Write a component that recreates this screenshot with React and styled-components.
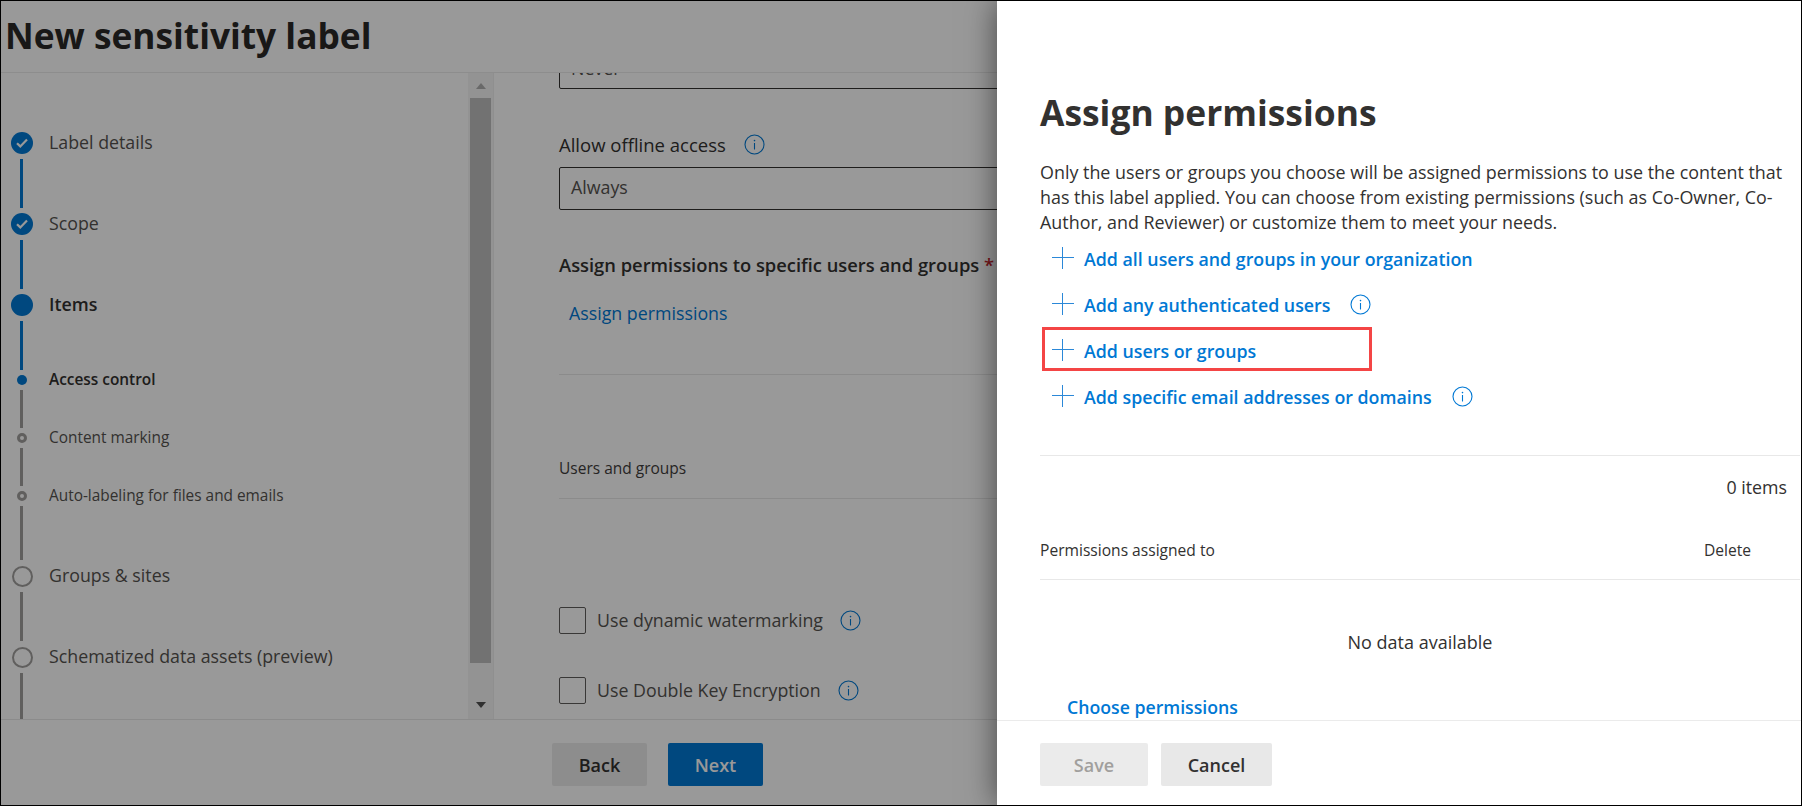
import React from "react";
import styled, { createGlobalStyle } from "styled-components";

const GlobalStyle = createGlobalStyle`
  html, body {
    margin: 0;
    padding: 0;
    background: #fff;
  }
  * {
    box-sizing: border-box;
  }
  body {
    font-family: "Open Sans", "Noto Sans", "Liberation Sans", sans-serif;
    color: #323130;
  }
`;

const Info = ({ color = "#0078d4" }) => (
  <svg width="21" height="21" viewBox="0 0 21 21" fill="none">
    <circle cx="10.5" cy="10.5" r="9.5" stroke={color} strokeWidth="1.1" />
    <path d="M10.5 9v6.5" stroke={color} strokeWidth="1.1" />
    <circle cx="10.5" cy="6.6" r="0.8" fill={color} />
  </svg>
);

const Plus = () => (
  <svg width="22" height="22" viewBox="0 0 22 22" fill="none">
    <path d="M10.5 0v22M0 10.5h22" stroke="#2b88d8" strokeWidth="1" />
  </svg>
);

const Check = () => (
  <svg width="12" height="10" viewBox="0 0 12 10" fill="none">
    <path d="M1 5.2l3.3 3.2L11 1.4" stroke="#fff" strokeWidth="2.2" />
  </svg>
);

const steps = [
  { kind: "done", label: "Label details" },
  { line: 49, on: true },
  { kind: "done", label: "Scope" },
  { line: 49, on: true },
  { kind: "current", label: "Items", bold: true },
  { line: 49, on: true },
  { kind: "subCurrent", label: "Access control", small: true, bold: true },
  { line: 38 },
  { kind: "sub", label: "Content marking", small: true },
  { line: 38 },
  { kind: "sub", label: "Auto-labeling for files and emails", small: true },
  { line: 54 },
  { kind: "todo", label: "Groups & sites" },
  { line: 49 },
  { kind: "todo", label: "Schematized data assets (preview)" },
  { line: 60 },
];

const addRows = [
  { label: "Add all users and groups in your organization" },
  { label: "Add any authenticated users", info: true },
  { label: "Add users or groups", marked: true },
  { label: "Add specific email addresses or domains", info: true },
];

const App = () => {
  return (
    <Root>
      <GlobalStyle />
      <Header>
        <PageTitle>New sensitivity label</PageTitle>
      </Header>
      <Body>
        <Sidebar>
          <Stepper>
            {steps.map((step, index) =>
              step.line ? (
                <Connector key={index} $height={step.line} $on={step.on} />
              ) : (
                <Step key={index} $small={step.small}>
                  <MarkerCell>
                    <Marker $kind={step.kind}>
                      {step.kind === "done" && <Check />}
                    </Marker>
                  </MarkerCell>
                  <StepLabel $small={step.small} $bold={step.bold}>
                    {step.label}
                  </StepLabel>
                </Step>
              )
            )}
          </Stepper>
          <ScrollTrack>
            <ArrowCell>
              <ArrowUp />
            </ArrowCell>
            <ScrollThumb />
            <ArrowCell $end>
              <ArrowDown />
            </ArrowCell>
          </ScrollTrack>
        </Sidebar>
        <Main>
          <Field $top="-27px" $scrolled>
            Never
          </Field>
          <FieldLabel>
            Allow offline access
            <Info />
          </FieldLabel>
          <Field>Always</Field>
          <SectionHeading>
            Assign permissions to specific users and groups <Required>*</Required>
          </SectionHeading>
          <MainLink>Assign permissions</MainLink>
          <Rule $top="48px" />
          <ColumnHeading>Users and groups</ColumnHeading>
          <Rule $top="20px" />
          <CheckRow $top="108px">
            <CheckBox />
            Use dynamic watermarking
            <Info />
          </CheckRow>
          <CheckRow $top="44px">
            <CheckBox />
            Use Double Key Encryption
            <Info />
          </CheckRow>
        </Main>
      </Body>
      <PageFooter>
        <Button>Back</Button>
        <Button $primary>Next</Button>
      </PageFooter>
      <Overlay />
      <Panel>
        <PanelBody>
          <PanelTitle>Assign permissions</PanelTitle>
          <Description>
            Only the users or groups you choose will be assigned permissions to use the content that
            <br />
            has this label applied. You can choose from existing permissions (such as Co-Owner, Co-
            <br />
            Author, and Reviewer) or customize them to meet your needs.
          </Description>
          <AddList>
            {addRows.map((row) => (
              <AddRow key={row.label} $marked={row.marked}>
                <Plus />
                <AddLabel>{row.label}</AddLabel>
                {row.info && <Info />}
              </AddRow>
            ))}
          </AddList>
          <TableBlock>
            <ItemCount>0 items</ItemCount>
            <TableHead>
              <span>Permissions assigned to</span>
              <DeleteHead>Delete</DeleteHead>
            </TableHead>
            <EmptyText>No data available</EmptyText>
          </TableBlock>
          <ChooseLink>Choose permissions</ChooseLink>
        </PanelBody>
        <PanelFooter>
          <PanelButton $disabled $width={108}>
            Save
          </PanelButton>
          <PanelButton $width={111}>Cancel</PanelButton>
        </PanelFooter>
      </Panel>
    </Root>
  );
};

const Root = styled.div`
  position: relative;
  display: flex;
  flex-direction: column;
  width: 1802px;
  height: 806px;
  border: 1px solid #000;
  overflow: hidden;
  background: #fff;
`;

const Header = styled.header`
  flex-shrink: 0;
  height: 72px;
  display: flex;
  align-items: center;
  padding: 0 0 4px 4px;
  border-bottom: 1px solid #ececec;
`;

const PageTitle = styled.h1`
  margin: 0;
  font-size: 35.3px;
  font-weight: 700;
  color: #2a2827;
`;

const Body = styled.div`
  flex: 1;
  display: flex;
  min-height: 0;
`;

const Sidebar = styled.aside`
  flex-shrink: 0;
  width: 493px;
  display: flex;
  overflow: hidden;
`;

const Stepper = styled.div`
  flex: 1;
  padding: 59px 0 0 10px;
`;

const Step = styled.div`
  display: flex;
  align-items: center;
  height: ${({ $small }) => ($small ? "10px" : "22px")};
`;

const MarkerCell = styled.div`
  width: 22px;
  display: flex;
  justify-content: center;
  margin-right: 16px;
`;

const Marker = styled.div`
  display: flex;
  align-items: center;
  justify-content: center;
  border-radius: 50%;
  ${({ $kind }) => {
    if ($kind === "done" || $kind === "current")
      return "width: 22px; height: 22px; background: #0078d4;";
    if ($kind === "subCurrent") return "width: 10px; height: 10px; background: #0078d4;";
    if ($kind === "sub") return "width: 10px; height: 10px; border: 3px solid #a19f9d;";
    return "width: 21px; height: 21px; border: 2.5px solid #a19f9d;";
  }}
`;

const StepLabel = styled.span`
  white-space: nowrap;
  line-height: 1;
  color: ${({ $bold }) => ($bold ? "#323130" : "#55534f")};
  font-size: ${({ $small }) => ($small ? "15.4px" : "17.8px")};
  font-weight: ${({ $bold }) => ($bold ? 600 : 400)};
`;

const Connector = styled.div`
  width: 3px;
  height: ${({ $height }) => $height}px;
  margin: 5px 0 5px 9px;
  background: ${({ $on }) => ($on ? "#0078d4" : "#a19f9d")};
`;

const ScrollTrack = styled.div`
  flex-shrink: 0;
  width: 26px;
  display: flex;
  flex-direction: column;
  background: #f5f5f5;
  border-right: 1px solid #eeeeee;
`;

const ArrowCell = styled.div`
  flex: ${({ $end }) => ($end ? "1" : "0 0 25px")};
  display: flex;
  justify-content: center;
  align-items: ${({ $end }) => ($end ? "flex-end" : "flex-start")};
  padding: ${({ $end }) => ($end ? "0 0 11px" : "10px 0 0")};
`;

const ArrowUp = styled.div`
  border-left: 5.5px solid transparent;
  border-right: 5.5px solid transparent;
  border-bottom: 6px solid #b0b0b0;
`;

const ArrowDown = styled.div`
  border-left: 5.5px solid transparent;
  border-right: 5.5px solid transparent;
  border-top: 6px solid #505050;
`;

const ScrollThumb = styled.div`
  flex-shrink: 0;
  height: 565px;
  margin: 0 2px;
  background: #bebebe;
`;

const Main = styled.main`
  flex: 1;
  min-width: 0;
  padding-left: 65px;
  overflow: hidden;
`;

const Field = styled.div`
  height: 43px;
  margin-top: ${({ $top }) => $top || "0"};
  padding: ${({ $scrolled }) => ($scrolled ? "0 0 0 11px" : "0 0 4px 11px")};
  display: flex;
  align-items: center;
  border: 1px solid #323130;
  border-radius: 2px;
  font-size: 17.8px;
  color: #55534f;
`;

const FieldLabel = styled.div`
  display: flex;
  align-items: center;
  gap: 18px;
  height: 26px;
  margin: 42px 0 10px;
  font-size: 18.5px;
  color: #323130;
`;

const SectionHeading = styled.div`
  margin-top: 42px;
  height: 26px;
  font-size: 18.35px;
  line-height: 26px;
  font-weight: 600;
  color: #323130;
`;

const Required = styled.span`
  color: #c4262e;
`;

const MainLink = styled.div`
  margin: 22px 0 0 10px;
  height: 26px;
  font-size: 17.8px;
  line-height: 26px;
  color: #0078d4;
`;

const Rule = styled.div`
  height: 1px;
  margin-top: ${({ $top }) => $top};
  background: #e8e8e8;
`;

const ColumnHeading = styled.div`
  margin-top: 83px;
  height: 20px;
  font-size: 15.5px;
  line-height: 20px;
  font-weight: 500;
  color: #3f3d3c;
`;

const CheckRow = styled.label`
  display: flex;
  align-items: center;
  height: 26px;
  margin-top: ${({ $top }) => $top};
  font-size: 17.8px;
  color: #55534f;

  svg {
    margin-left: 17px;
  }
`;

const CheckBox = styled.span`
  width: 27px;
  height: 27px;
  margin-right: 11px;
  border: 1px solid #605e5c;
  border-radius: 2px;
`;

const PageFooter = styled.footer`
  flex-shrink: 0;
  height: 86px;
  padding: 23px 0 0 551px;
  display: flex;
  align-items: flex-start;
  gap: 21px;
  border-top: 1px solid #e8e8e8;
`;

const Button = styled.button`
  width: 95px;
  height: 43px;
  border: 0;
  border-radius: 2px;
  font: 600 18px "Open Sans", sans-serif;
  background: ${({ $primary }) => ($primary ? "#0078d4" : "#ebebeb")};
  color: ${({ $primary }) => ($primary ? "#fff" : "#323130")};
`;

const Overlay = styled.div`
  position: absolute;
  inset: 0;
  background: rgba(0, 0, 0, 0.4);
`;

const Panel = styled.section`
  position: absolute;
  top: 0;
  right: 0;
  bottom: 0;
  width: 804px;
  display: flex;
  flex-direction: column;
  background: #fff;
  box-shadow: 0 0 30px rgba(0, 0, 0, 0.55);
`;

const PanelBody = styled.div`
  flex: 1;
  min-height: 0;
  padding: 84px 0 0 43px;
  overflow: hidden;
`;

const PanelTitle = styled.h2`
  margin: 0;
  height: 54px;
  font-size: 35.4px;
  line-height: 54px;
  font-weight: 700;
  color: #323130;
`;

const Description = styled.p`
  margin: 21px 0 0;
  font-size: 17.9px;
  line-height: 25px;
  white-space: nowrap;
  color: #323130;
`;

const AddList = styled.div`
  margin-top: 0;
`;

const AddRow = styled.div`
  position: relative;
  height: 46px;
  display: flex;
  align-items: center;
  padding-left: 12px;

  > svg:last-child:not(:first-child) {
    margin-left: 20px;
  }

  ${({ $marked }) =>
    $marked &&
    `&::after {
      content: "";
      box-sizing: border-box;
      position: absolute;
      left: 2px;
      top: 0;
      width: 330px;
      height: 44px;
      border: 3px solid #f44545;
    }`}
`;

const AddLabel = styled.span`
  margin-left: 10px;
  padding-top: 2px;
  font-size: 17.8px;
  font-weight: 600;
  color: #0078d4;
`;

const TableBlock = styled.div`
  margin-top: 36px;
  border-top: 1px solid #e8e8e8;
  width: 760px;
`;

const ItemCount = styled.div`
  height: 62px;
  padding: 18px 13px 0 0;
  text-align: right;
  font-size: 17.8px;
  line-height: 26px;
  color: #323130;
`;

const TableHead = styled.div`
  display: flex;
  justify-content: space-between;
  height: 62px;
  padding: 22px 49px 0 0;
  border-bottom: 1px solid #e8e8e8;
  font-size: 15.6px;
  line-height: 20px;
  font-weight: 500;
  color: #323130;
`;

const DeleteHead = styled.span`
  color: #323130;
`;

const EmptyText = styled.div`
  height: 114px;
  padding-top: 49px;
  text-align: center;
  font-size: 18px;
  line-height: 26px;
  color: #323130;
`;

const ChooseLink = styled.div`
  margin: 0 0 0 27px;
  height: 26px;
  font-size: 17.7px;
  line-height: 26px;
  font-weight: 600;
  color: #0078d4;
`;

const PanelFooter = styled.div`
  flex-shrink: 0;
  height: 85px;
  padding: 22px 0 0 43px;
  display: flex;
  align-items: flex-start;
  gap: 13px;
  border-top: 1px solid #ebebeb;
`;

const PanelButton = styled.button`
  width: ${({ $width }) => $width}px;
  height: 43px;
  border: 0;
  border-radius: 2px;
  font: 600 18px "Open Sans", sans-serif;
  background: ${({ $disabled }) => ($disabled ? "#ebebeb" : "#e8e8e8")};
  color: ${({ $disabled }) => ($disabled ? "#a19f9d" : "#323130")};
`;

export default App;
